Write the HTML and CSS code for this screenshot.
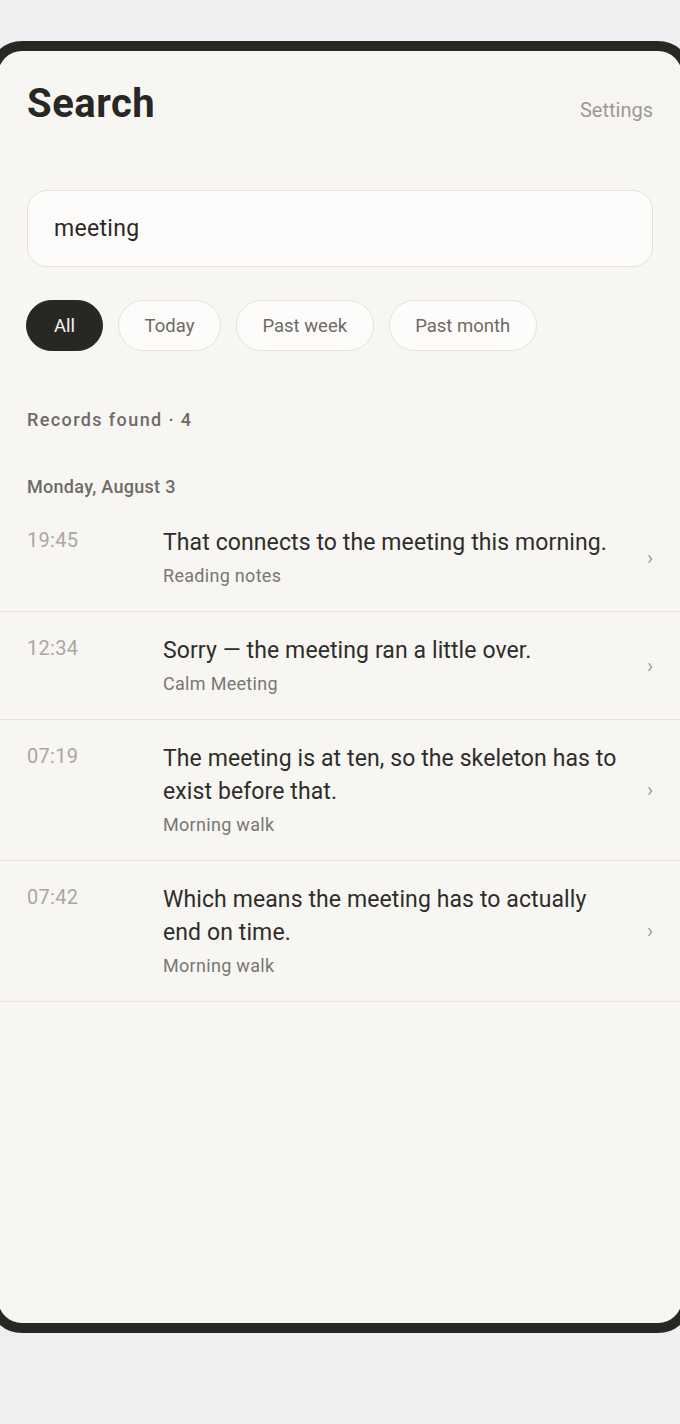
FILE: index.html
```html
<!DOCTYPE html>
<html lang="en">
<head>
<meta charset="utf-8">
<title>Search</title>
<link rel="stylesheet" href="styles.css">
</head>
<body>
<div class="device">
  <div class="screen">
    <header class="header">
      <h1 class="title">Search</h1>
      <span class="settings">Settings</span>
    </header>
    <div class="search-box">meeting</div>
    <div class="chips">
      <span class="chip active">All</span>
      <span class="chip">Today</span>
      <span class="chip">Past week</span>
      <span class="chip">Past month</span>
    </div>
    <div class="count">Records found · 4</div>
    <div class="date">Monday, August 3</div>
    <ul class="results">
      <li class="row">
        <span class="time">19:45</span>
        <div class="body">
          <div class="text">That connects to the meeting this morning.</div>
          <div class="source">Reading notes</div>
        </div>
        <span class="chev">›</span>
      </li>
      <li class="row">
        <span class="time">12:34</span>
        <div class="body">
          <div class="text">Sorry — the meeting ran a little over.</div>
          <div class="source">Calm Meeting</div>
        </div>
        <span class="chev">›</span>
      </li>
      <li class="row">
        <span class="time">07:19</span>
        <div class="body">
          <div class="text">The meeting is at ten, so the skeleton has to exist before that.</div>
          <div class="source">Morning walk</div>
        </div>
        <span class="chev">›</span>
      </li>
      <li class="row">
        <span class="time">07:42</span>
        <div class="body">
          <div class="text">Which means the meeting has to actually end on time.</div>
          <div class="source">Morning walk</div>
        </div>
        <span class="chev">›</span>
      </li>
    </ul>
  </div>
</div>
</body>
</html>
```
FILE: styles.css
```css
* { box-sizing: border-box; }
html, body { margin: 0; padding: 0; }
body {
  background: #f0eef1;
  font-family: Roboto, "Noto Sans", sans-serif;
  width: 680px;
  height: 1424px;
  overflow: hidden;
}
.device {
  margin: 41px 0 0 -12px;
  width: 704px;
  height: 1292px;
  border: 10px solid #292724;
  border-radius: 34px;
  background: #f7f6f2;
  overflow: hidden;
}
.screen {
  padding: 0 2px;
  width: 684px;
}
.header {
  display: flex;
  justify-content: space-between;
  align-items: baseline;
  padding: 29px 27px 0 27px;
  height: 139px;
}
.title {
  margin: 0;
  font-size: 40px;
  line-height: 48px;
  font-weight: 700;
  color: #292724;
  letter-spacing: 0.5px;
}
.settings {
  font-size: 20px;
  color: #9c9995;
}
.search-box {
  margin: 0 27px;
  height: 77px;
  border: 1.5px solid #e5e2dc;
  border-radius: 20px;
  background: #fdfcfa;
  padding: 0 26px;
  display: flex;
  align-items: center;
  font-size: 23px;
  letter-spacing: 0.3px;
  color: #2b2926;
}
.chips {
  display: flex;
  gap: 15px;
  padding: 33px 26px 0 26px;
}
.chip {
  height: 51px;
  padding: 0 25.5px;
  display: flex;
  align-items: center;
  border-radius: 26px;
  border: 1.5px solid #e5e2dc;
  background: #fdfcfa;
  font-size: 18.5px;
  color: #6d6a66;
}
.chip.active {
  background: #292723;
  border-color: #292723;
  color: #f7f6f2;
  padding: 0 27px;
}
.count {
  padding: 57px 27px 0 27px;
  font-size: 18px;
  line-height: 24px;
  font-weight: 500;
  letter-spacing: 1.4px;
  color: #6e6b67;
}
.date {
  padding: 43px 27px 0 27px;
  font-size: 18px;
  line-height: 24px;
  font-weight: 500;
  letter-spacing: 0.3px;
  color: #6e6b67;
}
.results {
  list-style: none;
  margin: 5px 0 0 0;
  padding: 0;
}
.row {
  display: flex;
  align-items: center;
  padding: 22px 27px 22px 27px;
  border-bottom: 1px solid #e7e4df;
}
.time {
  align-self: flex-start;
  width: 136px;
  flex: none;
  font-size: 20px;
  line-height: 29px;
  letter-spacing: 0.3px;
  color: #aaa7a3;
}
.body {
  flex: 1;
  min-width: 0;
  padding-right: 21px;
}
.text {
  font-size: 23px;
  line-height: 33px;
  letter-spacing: 0.1px;
  color: #2f2d2a;
}
.source {
  margin-top: 4px;
  font-size: 18px;
  line-height: 26px;
  letter-spacing: 0.3px;
  color: #7a7773;
}
.chev {
  flex: none;
  font-size: 20px;
  color: #a09d99;
}
```
